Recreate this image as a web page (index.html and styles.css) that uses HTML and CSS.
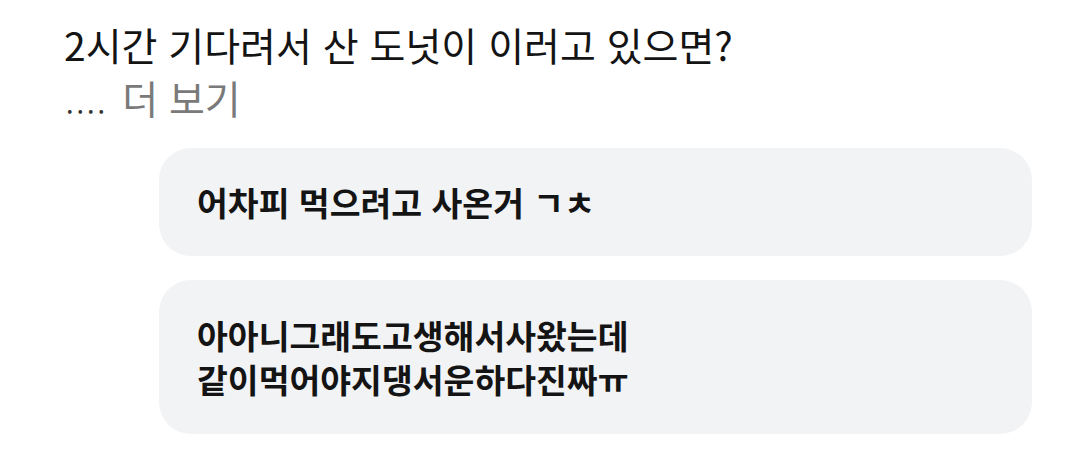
FILE: index.html
```html
<!DOCTYPE html>
<html lang="ko">
<head>
<meta charset="utf-8">
<link rel="stylesheet" href="styles.css">
</head>
<body>
<div class="page">
  <div class="post">
    <p class="title">2시간 기다려서 산 도넛이 이러고 있으면?</p>
    <p class="more"><span class="dots">....</span><span class="more-link">더 보기</span></p>
  </div>
  <div class="comments">
    <div class="bubble">어차피 먹으려고 사온거 ㄱㅊ</div>
    <div class="bubble">아아니그래도고생해서사왔는데<br>같이먹어야지댕서운하다진짜ㅠ</div>
  </div>
</div>
</body>
</html>
```

FILE: styles.css
```css
html, body {
  margin: 0;
  padding: 0;
  background: #ffffff;
}
body {
  font-family: "Noto Sans CJK KR", "Noto Sans", sans-serif;
  color: #111111;
}
.page {
  padding: 18px 48px 0 64px;
}
.post p {
  margin: 0;
}
.title {
  font-size: 39px;
  line-height: 53px;
  color: #141414;
}
.more {
  font-size: 39px;
  line-height: 53px;
}
.dots {
  color: #333333;
  font-size: 27px;
  letter-spacing: 3px;
  margin-right: 14px;
  margin-left: 2px;
}
.more-link {
  color: #7a7a7a;
}
.comments {
  margin-top: 19px;
  margin-left: 95px;
  display: flex;
  flex-direction: column;
  gap: 24px;
}
.bubble {
  background: #f2f3f5;
  border-radius: 32px;
  padding: 32px 38px;
  font-size: 33.5px;
  line-height: 44px;
  font-weight: 700;
  color: #141414;
}
.bubble + .bubble {
  padding-top: 33px;
  padding-bottom: 33px;
}
```
